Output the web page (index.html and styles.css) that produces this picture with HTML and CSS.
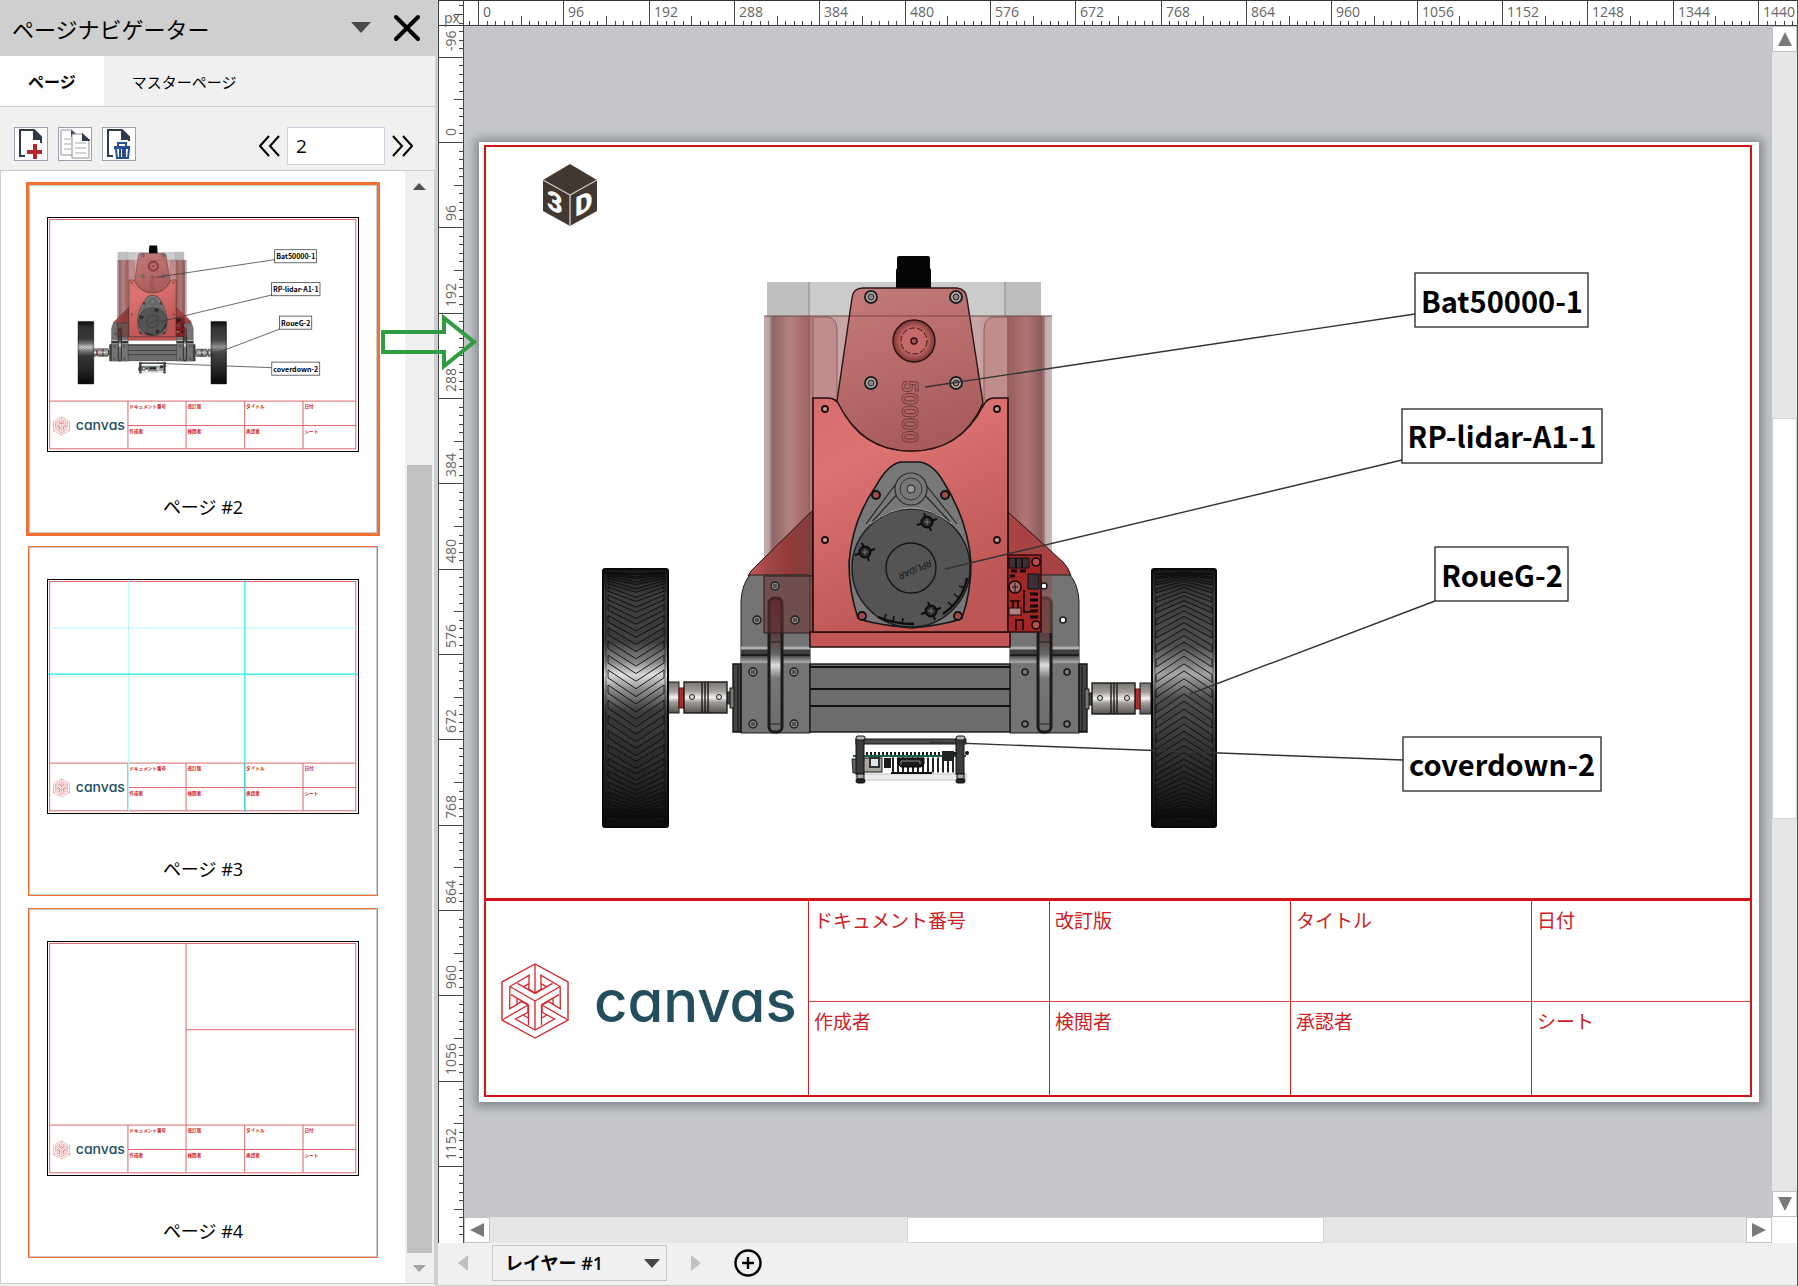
FILE: index.html
```html
<!DOCTYPE html>
<html lang="ja">
<head>
    <meta charset="UTF-8">
    <meta name="viewport" content="width=device-width, initial-scale=1.0">
    <title>ページナビゲーター</title>
    <link rel="stylesheet" href="styles.css">
</head>
<body>

    <!-- Shared drawings, used by the sheet and by the page thumbnails -->
    <svg class="defs" aria-hidden="true">
        <defs>
            <linearGradient id="gTire" x1="0" y1="0" x2="0" y2="1">
                <stop offset="0" stop-color="#161616"/>
                <stop offset=".1" stop-color="#3e3e3e"/>
                <stop offset=".28" stop-color="#404040"/>
                <stop offset=".36" stop-color="#8c8c8c"/>
                <stop offset=".41" stop-color="#e4e4e4"/>
                <stop offset=".47" stop-color="#8e8e8e"/>
                <stop offset=".55" stop-color="#3e3e3e"/>
                <stop offset=".8" stop-color="#282828"/>
                <stop offset="1" stop-color="#0c0c0c"/>
            </linearGradient>
            <linearGradient id="gTireR" x1="0" y1="0" x2="0" y2="1">
                <stop offset="0" stop-color="#161616"/>
                <stop offset=".1" stop-color="#3e3e3e"/>
                <stop offset=".3" stop-color="#505050"/>
                <stop offset=".41" stop-color="#aaa"/>
                <stop offset=".5" stop-color="#505050"/>
                <stop offset=".8" stop-color="#282828"/>
                <stop offset="1" stop-color="#0c0c0c"/>
            </linearGradient>
            <linearGradient id="gShell" x1="0" y1="0" x2="1" y2="0">
                <stop offset="0" stop-color="#c4b0b0"/>
                <stop offset=".025" stop-color="#b59a9a"/>
                <stop offset=".03" stop-color="#8f6464"/>
                <stop offset=".09" stop-color="#b58282"/>
                <stop offset=".15" stop-color="#a06464"/>
                <stop offset=".17" stop-color="#b98888"/>
                <stop offset=".26" stop-color="#c9a6a6"/>
                <stop offset=".74" stop-color="#c9a6a6"/>
                <stop offset=".84" stop-color="#b98080"/>
                <stop offset=".855" stop-color="#9a6060"/>
                <stop offset=".91" stop-color="#b07676"/>
                <stop offset=".965" stop-color="#8a5a5a"/>
                <stop offset=".975" stop-color="#c0a8a8"/>
                <stop offset="1" stop-color="#c8bcbc"/>
            </linearGradient>
            <linearGradient id="gPlate" x1="0" y1="0" x2=".4" y2="1">
                <stop offset="0" stop-color="#d86c6c"/>
                <stop offset=".3" stop-color="#dc7272"/>
                <stop offset="1" stop-color="#bd5555"/>
            </linearGradient>
            <linearGradient id="gBat" x1="0" y1="0" x2=".3" y2="1">
                <stop offset="0" stop-color="#c67c7c"/>
                <stop offset="1" stop-color="#aa5c5c"/>
            </linearGradient>
            <linearGradient id="gWing" x1="0" y1="0" x2="1" y2="0">
                <stop offset="0" stop-color="#c95a5a"/>
                <stop offset=".3" stop-color="#a04848"/>
                <stop offset=".6" stop-color="#943a3a"/>
                <stop offset="1" stop-color="#7e4040"/>
            </linearGradient>
            <linearGradient id="gMetal" x1="0" y1="0" x2="0" y2="1">
                <stop offset="0" stop-color="#77736f"/>
                <stop offset=".3" stop-color="#a39f9b"/>
                <stop offset=".5" stop-color="#f4f2f0"/>
                <stop offset=".65" stop-color="#a09c98"/>
                <stop offset="1" stop-color="#56524f"/>
            </linearGradient>
            <linearGradient id="gFold" x1="0" y1="0" x2="0" y2="1">
                <stop offset="0" stop-color="#777"/>
                <stop offset=".12" stop-color="#c4c4c4"/>
                <stop offset=".25" stop-color="#3c3c3c"/>
                <stop offset=".55" stop-color="#444"/>
                <stop offset=".9" stop-color="#aaa"/>
                <stop offset="1" stop-color="#6c6c6c"/>
            </linearGradient>
            <linearGradient id="gSlot" x1="0" y1="0" x2="0" y2="1">
                <stop offset="0" stop-color="#4c2c2c"/>
                <stop offset=".3" stop-color="#5a4444"/>
                <stop offset=".42" stop-color="#666"/>
                <stop offset=".5" stop-color="#ddd"/>
                <stop offset=".6" stop-color="#777"/>
                <stop offset="1" stop-color="#6c6c6c"/>
            </linearGradient>
            <radialGradient id="gKnob">
                <stop offset=".6" stop-color="#c46868"/>
                <stop offset="1" stop-color="#7a3434"/>
            </radialGradient>

            <g id="screw">
                <circle r="6" fill="#b9b3ae" stroke="#222" stroke-width="2"/>
                <circle r="3" fill="#8a8480" stroke="#222"/>
            </g>
            <g id="bolt">
                <circle r="4" fill="#8d8884" stroke="#1c1c1c" stroke-width="1.4"/>
                <path d="M-2-1H2M-2 1H2" stroke="#1c1c1c"/>
            </g>
            <g id="post" stroke="#0c0c0c">
                <path d="M-10 3L10-3M-3-9L4 9" stroke-width="2"/>
                <circle r="5.5" fill="#2a2a2a" stroke-width="2"/>
                <path d="M-3 0H3M0-3V3" stroke="#777"/>
            </g>
            <g id="coupling" stroke="#1a1a1a">
                <rect x="668" y="682" width="11" height="31" fill="url(#gMetal)"/>
                <rect x="679" y="688" width="5" height="20" fill="#a92c31" stroke="#571014"/>
                <rect x="727" y="692" width="4" height="12" fill="#444"/>
                <rect x="730" y="688" width="4" height="20" fill="#777"/>
                <rect x="684" y="682" width="43" height="31" fill="url(#gMetal)" stroke-width="1.4"/>
                <path d="M702 682V713M705 682V713M708 682V713" stroke-width="1.4"/>
                <circle cx="692" cy="697" r="2.5" fill="#ddd"/>
                <circle cx="719" cy="697" r="2.5" fill="#ddd"/>
            </g>
            <g id="bracket">
                <path d="M741 733V601Q742 584 750 575H808Q810 575 810 577V733Z" fill="#747474" stroke="#1d1d1d"/>
                <rect x="741" y="646" width="69" height="18" fill="url(#gFold)"/>
                <path d="M741 655H810" stroke="#111" stroke-width="1.4"/>
                <rect x="769" y="598" width="13" height="134" rx="5" fill="url(#gSlot)" stroke="#1a1a1a" stroke-width="3"/>
                <path d="M769 642H782M769 724H782" stroke="#222"/>
            </g>
            <!-- one third of the logo, repeated every 120 degrees -->
            <g id="logoArm" fill="none" stroke="#d3262b" stroke-width="1.3">
                <path d="M0-37V-8M-6.5-12L0-8L6.5-12"/>
                <path d="M0 0V29M-6.5 4V24M6.5 4V24"/>
                <path d="M-6.5 11L-19.5 18L0 29L19.5 18L6.5 11M-12 14L-6.5 17M12 14L6.5 17"/>
            </g>
            <g id="logo">
                <path d="M0-37L33-19V19L0 37L-33 19V-19Z" fill="none" stroke="#d3262b" stroke-width="1.4"/>
                <use href="#logoArm"/>
                <use href="#logoArm" transform="rotate(120)"/>
                <use href="#logoArm" transform="rotate(240)"/>
            </g>

            <g id="robot">
                <!-- transparent housing -->
                <rect x="767" y="282" width="274" height="36" fill="#cbcbcb"/>
                <rect x="767" y="282" width="42" height="36" fill="#bfbfbf"/>
                <rect x="1005" y="282" width="36" height="36" fill="#bdbdbd"/>
                <path d="M809 282V316M1005 282V316" stroke="#888"/>
                <rect x="764" y="316" width="288" height="317" fill="url(#gShell)"/>
                <path d="M764 316H1052" stroke="#6a4a4a"/>
                <path d="M813 317H828Q837 319 837 330V400H813ZM1008 317H993Q984 319 984 330V400H1008Z" fill="#c08c8c" stroke="#8e5c5c"/>
                <path d="M771 317V633M1044 317V633M809 317V570M1008 317V570" stroke="#74504f" stroke-opacity=".7"/>

                <!-- side wings and brackets -->
                <path d="M813 510L756 566Q750 571 748 576H813Z" fill="url(#gWing)" stroke="#2a1010"/>
                <path d="M1008 512L1063 562Q1069 568 1071 576H1008Z" fill="#a94343" stroke="#2a1010"/>
                <use href="#bracket"/>
                <use href="#bracket" transform="matrix(-1 0 0 1 1820 0)"/>
                <path d="M764 576H813V633H764Z" fill="#6b3030" fill-opacity=".55" stroke="#2e1a1a"/>
                <path d="M1040 576H1052V633H1040Z" fill="#8a5050" fill-opacity=".6"/>

                <!-- camera, battery and front plate -->
                <path d="M897 258Q897 256 899 256H928Q930 256 930 258V268L931 270V290H896V270L897 268Z" fill="#050505"/>
                <path d="M810 632H1010V647H810Z" fill="#c45656" stroke="#241010" stroke-width="1.4"/>
                <path d="M813 398H828Q836 398 840 406Q862 451 911 451Q960 451 983 406Q987 398 994 398H1008V632H813Z" fill="url(#gPlate)" stroke="#1d0c0c" stroke-width="1.6"/>
                <path d="M852 298Q853 288 863 288H957Q966 289 967 299L983 403Q962 451 911 451Q861 451 837 401Z" fill="url(#gBat)" stroke="#2b1414" stroke-width="1.4"/>
                <path d="M850 316H970" stroke="#7a4040"/>
                <use href="#screw" x="871" y="297"/>
                <use href="#screw" x="956" y="297"/>
                <use href="#screw" x="871" y="383"/>
                <use href="#screw" x="956" y="383"/>
                <circle cx="914" cy="341" r="21" fill="url(#gKnob)" stroke="#2a1010" stroke-width="1.4"/>
                <circle cx="914" cy="341" r="13" fill="#c46a6a" stroke="#3a1818" stroke-dasharray="6 2"/>
                <circle cx="914" cy="341" r="3" fill="#a85555" stroke="#2a1010" stroke-width="1.4"/>
                <text class="emboss" transform="translate(902 380) rotate(90)">50000</text>
                <g fill="#c9a0a0" stroke="#1d0c0c" stroke-width="1.8">
                    <circle cx="825" cy="409" r="3"/>
                    <circle cx="997" cy="409" r="3"/>
                    <circle cx="825" cy="540" r="3"/>
                    <circle cx="997" cy="540" r="3"/>
                </g>

                <!-- lidar -->
                <path d="M901 462H920Q933 464 943 481Q968 520 971 563Q971 592 962 618Q950 624 912 628Q870 624 858 618Q849 592 849 563Q852 520 876 486Q888 464 901 462Z" fill="#787878" stroke="#161616" stroke-width="1.6"/>
                <path d="M895 485L866 524M900 491L872 522M926 485L957 524M921 491L950 522" stroke="#262626" stroke-width="1.2"/>
                <circle cx="911" cy="568" r="59" fill="#545454" stroke="#1c1c1c" stroke-width="1.4"/>
                <path d="M870 524Q911 492 952 524" fill="none" stroke="#a8a8a8"/>
                <circle cx="911" cy="489" r="16" fill="#777" stroke="#2a2a2a" stroke-width="1.2"/>
                <circle cx="911" cy="489" r="11" fill="none" stroke="#333"/>
                <circle cx="911" cy="489" r="4" fill="#999" stroke="#222"/>
                <circle cx="911" cy="568" r="25" fill="none" stroke="#141414" stroke-width="1.4"/>
                <text class="lidar-text" transform="translate(930 560) rotate(157)">RPLIDAR</text>
                <use href="#post" x="927" y="522"/>
                <use href="#post" x="865" y="552"/>
                <use href="#post" x="931" y="611"/>
                <g fill="#a04a4a" stroke="#111" stroke-width="2">
                    <circle cx="876" cy="495" r="4"/>
                    <circle cx="945" cy="495" r="4"/>
                    <circle cx="862" cy="616" r="4"/>
                    <circle cx="958" cy="616" r="4"/>
                </g>
                <path d="M878 617Q894 624 914 624M943 614Q963 600 967 578" fill="none" stroke="#0c0c0c" stroke-width="2.4"/>
                <path d="M884 620L886 614M893 622L894 616M902 624L903 618M952 606L948 602M959 598L954 594M965 588L959 586" stroke="#0c0c0c" stroke-width="1.6"/>

                <!-- controller board -->
                <rect x="1008" y="555" width="33" height="77" fill="#a32626" stroke="#2a0808" stroke-width="1.4"/>
                <path d="M1009 558H1029V568H1009ZM1028 574H1039V589H1028Z" fill="#3c3038" stroke="#0d0d0d"/>
                <path d="M1011 571H1017M1020 571H1026M1010 576H1015M1030 594H1038M1030 600H1038M1030 606H1038M1030 611H1038M1030 617H1038" stroke="#120606" stroke-width="3"/>
                <path d="M1016 558V568M1022 558V568M1024 590V612H1031M1010 601H1020M1013 601V608M1018 601V608M1016 630V620H1023V630" fill="none" stroke="#120606" stroke-width="1.6"/>
                <rect x="1009" y="608" width="12" height="7" fill="#b08080" stroke="#220a0a"/>
                <circle cx="1015" cy="587" r="6" fill="#a86a6a" stroke="#180606" stroke-width="1.6"/>
                <path d="M1012 587H1018M1015 583V592" stroke="#180606"/>
                <circle cx="1036" cy="562" r="4" fill="#b05050" stroke="#180606" stroke-width="1.6"/>
                <circle cx="1036" cy="625" r="4" fill="#b05050" stroke="#180606" stroke-width="1.6"/>

                <!-- cross bar -->
                <rect x="810" y="664" width="200" height="68" fill="#6d6d6d" stroke="#161616" stroke-width="1.4"/>
                <path d="M810 667H1010M810 689H1010M810 706H1010" stroke="#0f0f0f" stroke-width="1.8"/>
                <path d="M733 664H741V732H733ZM1079 664H1087V732H1079Z" fill="#444" stroke="#111" stroke-width="1.4"/>
                <path d="M738 666V732M1082 666V732" stroke="#111"/>
                <use href="#bolt" x="753" y="672"/>
                <use href="#bolt" x="794" y="672"/>
                <use href="#bolt" x="753" y="724"/>
                <use href="#bolt" x="794" y="724"/>
                <use href="#bolt" x="757" y="620"/>
                <use href="#bolt" x="795" y="620"/>
                <use href="#bolt" x="775" y="586"/>
                <g fill="#777" stroke="#1a1a1a" stroke-width="1.6">
                    <circle cx="1025" cy="672" r="3"/>
                    <circle cx="1067" cy="672" r="3"/>
                    <circle cx="1025" cy="724" r="3"/>
                    <circle cx="1067" cy="724" r="3"/>
                    <circle cx="1044" cy="586" r="3" fill="#fff"/>
                    <circle cx="1063" cy="620" r="3" fill="#fff"/>
                </g>

                <!-- axles and wheels -->
                <use href="#coupling"/>
                <use href="#coupling" transform="matrix(-1 0 0 1 1819 1)"/>
                <rect x="603" y="569" width="65" height="258" rx="2" fill="url(#gTire)" stroke="#080808" stroke-width="2"/>
                <path d="M606 571V825M665 571V825" stroke="#000" stroke-opacity=".5"/>
                <path id="treadLeft" class="tread"/>
                <rect x="1152" y="569" width="64" height="258" rx="2" fill="url(#gTireR)" stroke="#080808" stroke-width="2"/>
                <path d="M1155 571V825M1213 571V825" stroke="#000" stroke-opacity=".5"/>
                <path id="treadRight" class="tread"/>

                <!-- lower board -->
                <rect x="856" y="774" width="110" height="6" fill="#ececec" stroke="#c4c4c4"/>
                <path d="M866 754H956" stroke="#1a1a1a" stroke-width="4" stroke-dasharray="2 2"/>
                <path d="M892 765H956" stroke="#222" stroke-width="15" stroke-dasharray="2 3"/>
                <rect x="856" y="739" width="110" height="5" fill="#4c4c4c" stroke="#141414"/>
                <path d="M853 756H966" stroke="#16624f" stroke-width="2"/>
                <path d="M852 759H858V773H853Z" fill="#666" stroke="#222"/>
                <rect x="863" y="758" width="19" height="14" fill="#a8a49e" stroke="#161616"/>
                <rect x="870" y="758" width="9" height="9" fill="#dfe4ee" stroke="#333" stroke-width="2"/>
                <path d="M884 758H891V768H884Z" fill="#1c1c1c"/>
                <path d="M898 758H924V764L921 767H901L898 764Z" fill="#1a1a1a" stroke="#000"/>
                <path d="M901 764V761H920V764" fill="none" stroke="#888"/>
                <path d="M942 751H954V761H942Z" fill="#222"/>
                <path d="M891 773H932" stroke="#111" stroke-width="2"/>
                <circle cx="967" cy="753" r="2" fill="#111"/>
                <g fill="#3c3c3c" stroke="#111">
                    <rect x="856" y="739" width="8" height="35"/>
                    <rect x="956" y="739" width="8" height="35"/>
                    <rect x="856" y="736" width="9" height="4" rx="2" fill="#b8b2aa"/>
                    <rect x="956" y="736" width="9" height="4" rx="2" fill="#b8b2aa"/>
                    <rect x="857" y="774" width="7" height="5" fill="#aaa49c"/>
                    <rect x="957" y="774" width="7" height="5" fill="#aaa49c"/>
                    <rect x="856" y="779" width="9" height="4" rx="2" fill="#222"/>
                    <rect x="956" y="779" width="9" height="4" rx="2" fill="#222"/>
                </g>
            </g>

            <g id="callouts">
                <path class="leader" d="M925 387L1415 314M945 569L1402 460M1190 694L1435 601M930 742L1403 760"/>
                <rect class="callout" x="1415" y="273" width="173" height="54"/>
                <rect class="callout" x="1402" y="409" width="200" height="54"/>
                <rect class="callout" x="1435" y="547" width="133" height="54"/>
                <rect class="callout" x="1403" y="737" width="198" height="54"/>
                <text class="callout-text" x="1502" y="313">Bat50000-1</text>
                <text class="callout-text" x="1502" y="448">RP-lidar-A1-1</text>
                <text class="callout-text" x="1502" y="587">RoueG-2</text>
                <text class="callout-text" x="1502" y="776">coverdown-2</text>
            </g>

            <!-- frame and title block for the thumbnails -->
            <g id="template">
                <rect class="mini-line" x="486" y="148" width="1264" height="947"/>
                <path class="mini-line" d="M486 898H1750M809 898V1095M1049 898V1095M1291 898V1095M1532 898V1095M809 999H1750"/>
                <use href="#logo" x="535" y="1001"/>
                <text class="mini-brand" x="594" y="1017">canvas</text>
                <g class="mini-text">
                    <text x="815" y="926">ドキュメント番号</text>
                    <text x="1055" y="926">改訂版</text>
                    <text x="1297" y="926">タイトル</text>
                    <text x="1538" y="926">日付</text>
                    <text x="815" y="1028">作成者</text>
                    <text x="1055" y="1028">検閲者</text>
                    <text x="1297" y="1028">承認者</text>
                    <text x="1538" y="1028">シート</text>
                </g>
            </g>
        </defs>
    </svg>

    <div class="app">
        <aside class="navigator">
            <header class="nav-header">
                <h1>ページナビゲーター</h1>
                <button class="icon-button" aria-label="メニュー">
                    <svg width="20" height="12"><path d="M0 0H20L10 11Z" fill="#4a4a4a"/></svg>
                </button>
                <button class="icon-button" aria-label="閉じる">
                    <svg width="28" height="28"><path d="M3 3L25 25M25 3L3 25" stroke="#000" stroke-width="4" stroke-linecap="round"/></svg>
                </button>
            </header>

            <nav class="tabs">
                <button class="tab active">ページ</button>
                <button class="tab">マスターページ</button>
            </nav>

            <div class="toolbar">
                <button class="tool" aria-label="ページを追加">
                    <svg width="32" height="32" fill="none">
                        <path d="M10 28H5V2H19L26 9V15" stroke="#2d3a4a" stroke-width="2"/>
                        <path d="M18 1L27 10V12H18Z" fill="#2d3a4a"/>
                        <path d="M20 16V31M12 24H27" stroke="#b3282d" stroke-width="4"/>
                    </svg>
                </button>
                <button class="tool" aria-label="ページを複製">
                    <svg width="32" height="32" fill="#fff" stroke="#8a909a">
                        <path d="M2 2H13L18 7V27H2Z"/>
                        <path d="M5 11H12M5 16H12M5 21H12" stroke="#aaa"/>
                        <path d="M12 2L19 8V9H12Z" fill="#2d3a4a" stroke="none"/>
                        <path d="M13 6H24L30 12V30H13Z"/>
                        <path d="M16 15H27M16 20H27M16 25H27" stroke="#aaa"/>
                        <path d="M23 5L31 12V13H23Z" fill="#2d3a4a" stroke="none"/>
                    </svg>
                </button>
                <button class="tool" aria-label="ページを削除">
                    <svg width="32" height="32" fill="none">
                        <path d="M10 28H5V2H19L26 9V13" stroke="#2d3a4a" stroke-width="2"/>
                        <path d="M18 1L27 10V12H18Z" fill="#2d3a4a"/>
                        <path d="M15 18V15H23V18" stroke="#24508f" stroke-width="2"/>
                        <path d="M11 18H27V21H11Z" fill="#24508f"/>
                        <path d="M13 21L14 30H25L26 21M17 21V30M20 21V30M22 21V30" stroke="#24508f" stroke-width="2"/>
                    </svg>
                </button>
                <div class="pager">
                    <button class="icon-button" aria-label="前のページ">
                        <svg width="21" height="22" fill="none" stroke="#000" stroke-width="2"><path d="M10 1L1 11L10 21M20 1L11 11L20 21"/></svg>
                    </button>
                    <input class="page-input" type="text" value="2" aria-label="ページ番号">
                    <button class="icon-button" aria-label="次のページ">
                        <svg width="21" height="22" fill="none" stroke="#000" stroke-width="2"><path d="M1 1L10 11L1 21M11 1L20 11L11 21"/></svg>
                    </button>
                </div>
            </div>

            <div class="page-list">
                <div class="cards">
                    <button class="card selected">
                        <svg class="thumb" viewBox="479 142 1280 960">
                            <use href="#template"/>
                            <use href="#robot"/>
                            <use href="#callouts"/>
                        </svg>
                        <span>ページ #2</span>
                    </button>
                    <button class="card">
                        <svg class="thumb" viewBox="479 142 1280 960">
                            <use href="#template"/>
                            <path d="M811 142V1102M479 340H1759" stroke="#b5f6f6" stroke-width="4"/>
                            <path d="M1292 142V1102M479 531H1759" stroke="#19eef2" stroke-width="5"/>
                        </svg>
                        <span>ページ #3</span>
                    </button>
                    <button class="card">
                        <svg class="thumb" viewBox="479 142 1280 960">
                            <use href="#template"/>
                            <path class="mini-line" d="M1049 148V900M1049 504H1746"/>
                        </svg>
                        <span>ページ #4</span>
                    </button>
                </div>
                <div class="list-scroll">
                    <button class="list-arrow" aria-label="上へ"><svg width="13" height="7"><path d="M0 7L6 0L13 7Z" fill="#505050"/></svg></button>
                    <div class="list-space"></div>
                    <div class="list-thumb"></div>
                    <button class="list-arrow" aria-label="下へ"><svg width="13" height="7"><path d="M0 0L6 7L13 0Z" fill="#a3a3a3"/></svg></button>
                </div>
            </div>
        </aside>

        <main class="editor">
            <div class="canvas-grid">
                <svg class="ruler-v" id="rulerV">
                    <path d="M0 24.5H26" stroke="#333"/>
                    <text x="5" y="22">px</text>
                </svg>
                <svg class="ruler-h" id="rulerH"></svg>

                <section class="workspace">
                    <div class="sheet">
                        <div class="frame">
                            <svg class="drawing" viewBox="486 147 1264 751">
                                <g>
                                    <path d="M570 164L597 180V211L570 226L543 211V180Z" fill="#43382f"/>
                                    <path d="M543 180L570 195L597 180M570 195V226" fill="none" stroke="#c9c5c1" stroke-width="1.4"/>
                                    <text class="cube-text" transform="translate(547 208) skewY(25)">3</text>
                                    <text class="cube-text" transform="translate(575 217) skewY(-25)">D</text>
                                </g>
                                <use href="#robot"/>
                                <use href="#callouts"/>
                            </svg>
                            <div class="title-block">
                                <div class="brand">
                                    <svg width="68" height="76" viewBox="-34 -38 68 76"><use href="#logo"/></svg>
                                    <span>canvas</span>
                                </div>
                                <div class="field">ドキュメント番号</div>
                                <div class="field">改訂版</div>
                                <div class="field">タイトル</div>
                                <div class="field">日付</div>
                                <div class="field">作成者</div>
                                <div class="field">検閲者</div>
                                <div class="field">承認者</div>
                                <div class="field">シート</div>
                            </div>
                        </div>
                    </div>
                </section>

                <div class="scroll-v">
                    <button class="scroll-button" aria-label="上へスクロール"><svg width="14" height="14"><path d="M0 14L7 0L14 14Z"/></svg></button>
                    <div class="before"></div>
                    <div class="scroll-thumb"></div>
                    <div class="after"></div>
                    <button class="scroll-button" aria-label="下へスクロール"><svg width="14" height="14"><path d="M0 0L7 14L14 0Z"/></svg></button>
                </div>

                <div class="scroll-h">
                    <button class="scroll-button" aria-label="左へスクロール"><svg width="14" height="14"><path d="M14 0L0 7L14 14Z"/></svg></button>
                    <div class="before"></div>
                    <div class="scroll-thumb"></div>
                    <div class="after"></div>
                    <button class="scroll-button" aria-label="右へスクロール"><svg width="14" height="14"><path d="M0 0L14 7L0 14Z"/></svg></button>
                </div>
                <div class="scroll-corner"></div>
            </div>

            <footer class="layer-bar">
                <button class="icon-button" aria-label="前のレイヤー"><svg width="10" height="16"><path d="M10 0L0 8L10 16Z" fill="#c0c0c0"/></svg></button>
                <div class="layer-select">
                    <select aria-label="レイヤー">
                        <option>レイヤー #1</option>
                    </select>
                </div>
                <button class="icon-button" aria-label="次のレイヤー"><svg width="10" height="16"><path d="M0 0L10 8L0 16Z" fill="#c0c0c0"/></svg></button>
                <button class="icon-button add-layer" aria-label="レイヤーを追加">
                    <svg width="28" height="28" fill="none" stroke="#000"><circle cx="14" cy="14" r="12.5" stroke-width="2.4"/><path d="M14 8V20M8 14H20" stroke-width="2.4"/></svg>
                </button>
            </footer>
        </main>

        <svg class="pointer-arrow" width="100" height="60" aria-hidden="true">
            <path d="M4 20H65V6L95 30L65 54V40H4Z" fill="none" stroke="#2f9c41" stroke-width="4"/>
        </svg>
    </div>

    <script>
        const NS = 'http://www.w3.org/2000/svg';
        const UNIT = 96 * 8 / 9; // 96 document px on screen

        function drawRuler(svg, origin, vertical, start) {
            const box = svg.getBoundingClientRect();
            const end = (vertical ? box.height : box.width) - 4;
            let d = '';
            for (let i = -20; ; i++) {
                const pos = Math.round(origin + i * UNIT / 10) + 0.5;
                if (pos > end) break;
                if (pos < 0) continue;
                const major = i % 10 === 0;
                if (major && pos < start) continue;
                const len = major ? 25 : i % 5 === 0 ? 10 : 5;
                d += vertical ? `M25 ${pos}h${-len}` : `M${pos} 25v${-len}`;
                if (major) {
                    const label = document.createElementNS(NS, 'text');
                    label.textContent = i / 10 * 96;
                    label.setAttribute('transform', vertical
                        ? `translate(17 ${Math.round(pos) - 7}) rotate(-90)`
                        : `translate(${Math.round(pos) + 4} 16)`);
                    svg.appendChild(label);
                }
            }
            const path = document.createElementNS(NS, 'path');
            path.setAttribute('d', d);
            path.setAttribute('stroke', '#444');
            svg.appendChild(path);
        }

        // Tread bars get closer together towards the rim
        function drawTread(id, x, width, dir) {
            let d = '';
            for (let i = -12; i <= 12; i++) {
                const a = i * 0.125;
                const y = 695 + 122 * Math.sin(a) - dir * 10 * Math.cos(a);
                const h = dir * 19 * Math.cos(a);
                const t = 8 * Math.cos(a);
                d += `M${x} ${y}L${x + width / 2} ${y + h}L${x + width} ${y}v${t}L${x + width / 2} ${y + h + t}L${x} ${y + t}Z`;
            }
            document.getElementById(id).setAttribute('d', d);
        }

        drawRuler(document.getElementById('rulerH'), 14, false, 0);
        drawRuler(document.getElementById('rulerV'), 141, true, 26);
        drawTread('treadLeft', 608, 56, 1);
        drawTread('treadRight', 1156, 56, -1);
    </script>

</body>
</html>
```
FILE: styles.css
```css
* {
    box-sizing: border-box;
}
body {
    margin: 0;
    font-family: 'Open Sans', 'Noto Sans CJK JP', sans-serif;
    color: #000;
    background: #f0f0f0;
}
button, input, select {
    font: inherit;
    color: inherit;
}
button {
    padding: 0;
    border: none;
    background: none;
    cursor: pointer;
}
svg {
    display: block;
}
.defs {
    position: absolute;
    width: 0;
    height: 0;
}
.app {
    position: relative;
    display: flex;
    height: 100vh;
    overflow: hidden;
}
.icon-button {
    display: flex;
    align-items: center;
    justify-content: center;
}

/* Page navigator */
.navigator {
    flex: none;
    display: flex;
    flex-direction: column;
    width: 438px;
    padding-bottom: 2px;
    border-right: 3px solid #d0d0d0;
}
.nav-header {
    display: flex;
    align-items: center;
    gap: 22px;
    height: 56px;
    padding: 0 14px 0 12px;
    background: #cfcfcf;
}
.nav-header h1 {
    flex: 1;
    margin: 0;
    font-size: 22px;
    font-weight: normal;
}
.tabs {
    display: flex;
    height: 51px;
    border-bottom: 1px solid #ccc;
}
.tab {
    padding: 0 28px;
    font-size: 15px;
}
.tab.active {
    font-size: 16px;
    font-weight: bold;
    background: #fdfdfd;
}
.toolbar {
    display: flex;
    align-items: flex-start;
    gap: 10px;
    height: 63px;
    padding: 20px 22px 0 14px;
}
.tool {
    width: 34px;
    height: 34px;
    border: 1px solid #9ca1ae;
    background: #fff;
}
.pager {
    display: flex;
    align-items: center;
    gap: 7px;
    margin-left: auto;
}
.page-input {
    width: 98px;
    height: 38px;
    padding: 0 8px;
    border: 1px solid #cdd1de;
    background: #fff;
    font-size: 19px;
}
.page-list {
    flex: 1;
    display: flex;
    min-height: 0;
    border: 1px solid #ccc;
    background: #fff;
}
.cards {
    flex: 1;
    display: flex;
    flex-direction: column;
    align-items: center;
    gap: 12px;
    padding-top: 13px;
    overflow: hidden;
}
.card {
    flex: none;
    display: flex;
    flex-direction: column;
    align-items: center;
    gap: 43px;
    width: 350px;
    height: 350px;
    padding-top: 32px;
    border: 1px solid #f37032;
    box-shadow: inset 0 0 0 1px #ccc;
    background: #fff;
    font-size: 18px;
    line-height: 24px;
}
.card.selected {
    box-shadow: inset 0 0 0 1px #ccc, 0 0 0 2px #f37032;
}
/* lines drawn wider so they stay visible at this scale */
.thumb {
    --line: 3;
    width: 312px;
    border: 1px solid #000;
}
.list-scroll {
    display: flex;
    flex-direction: column;
    width: 29px;
    padding: 0 2px;
    background: #f0f0f0;
}
.list-arrow {
    display: flex;
    align-items: center;
    justify-content: center;
    height: 30px;
}
.list-space {
    flex: 265;
}
.list-thumb {
    flex: 790;
    background: #c1c1c1;
}

/* Editor */
.editor {
    flex: 1;
    display: flex;
    flex-direction: column;
    min-width: 0;
    border-right: 1px solid #555;
}
.canvas-grid {
    flex: 1;
    display: grid;
    grid-template-columns: 26px minmax(0, 1fr) 25px;
    grid-template-rows: 26px minmax(0, 1fr) 26px;
    min-height: 0;
}
.ruler-v, .ruler-h {
    background: #fff;
    overflow: hidden;
}
.ruler-v text, .ruler-h text {
    font-size: 14px;
    fill: #666;
}
.ruler-v {
    grid-area: 1 / 1 / 4 / 2;
    width: 26px;
    height: 100%;
    border-top: 1px solid #333;
    border-left: 1px solid #444;
    border-right: 1px solid #444;
}
.ruler-h {
    grid-area: 1 / 2 / 2 / 4;
    width: 100%;
    height: 26px;
    border-top: 1px solid #333;
    border-bottom: 1px solid #444;
}
.workspace {
    grid-area: 2 / 2;
    padding: 116px 13px 0 15px;
    background: #c4c6cb;
    overflow: hidden;
}
.sheet {
    aspect-ratio: 4 / 3;
    padding: 3px 7px 5px 5px;
    background: #fff;
    box-shadow: 0 1px 9px 4px #85898d;
}
.frame {
    display: flex;
    flex-direction: column;
    height: 100%;
    border: 2px solid #d01418;
}
.drawing {
    width: 100%;
}
.title-block {
    flex: 1;
    display: grid;
    grid-template-columns: 322fr 241fr 241fr 241fr 219fr;
    grid-template-rows: 100fr 94fr;
    border-top: 3px solid #d01418;
    color: #cf2024;
    font-family: 'Noto Sans CJK JP', sans-serif;
    font-size: 19px;
    line-height: 24px;
}
.brand {
    grid-row: 1 / 3;
    display: flex;
    align-items: center;
    gap: 25px;
    padding: 6px 0 0 15px;
    color: #234e5e;
    font-family: Inter, sans-serif;
    font-size: 58px;
    font-weight: 500;
    font-feature-settings: 'cv11';
    line-height: 76px;
}
.field {
    padding: 7px 5px;
    border-left: 1px solid #cf2024;
}
.field:nth-child(n+6) {
    border-top: 1px solid #d8484b;
}

/* Drawing parts */
.tread {
    fill: #000;
    fill-opacity: .06;
    stroke: #0a0a0a;
    stroke-width: .9;
}
.emboss {
    font-family: Roboto, sans-serif;
    font-size: 22px;
    font-weight: bold;
    fill: none;
    stroke: #6e3434;
    stroke-width: .8;
}
.lidar-text {
    font-family: Roboto, sans-serif;
    font-size: 9px;
    font-style: italic;
    fill: #141414;
}
.leader, .callout {
    fill: none;
    stroke: #333;
    stroke-width: var(--line, 1.4);
}
.callout {
    fill: #fff;
}
.callout-text {
    font-family: 'Noto Sans CJK JP', sans-serif;
    font-size: 29px;
    font-weight: bold;
    text-anchor: middle;
}
.cube-text {
    font-family: Roboto, sans-serif;
    font-size: 27px;
    font-weight: 900;
    fill: #fff;
}
.mini-line {
    fill: none;
    stroke: #dc6366;
    stroke-width: 4;
}
.mini-brand {
    font-family: Inter, sans-serif;
    font-size: 58px;
    font-weight: 500;
    font-feature-settings: 'cv11';
    fill: #234e5e;
}
.mini-text {
    font-family: 'Noto Sans CJK JP', sans-serif;
    font-size: 19px;
    font-weight: bold;
    fill: #cf2024;
}

/* Scroll bars */
.scroll-v, .scroll-h {
    display: flex;
    background: #e6e6e6;
}
.scroll-v {
    grid-area: 2 / 3;
    flex-direction: column;
}
.scroll-h {
    grid-area: 3 / 2;
}
.scroll-corner {
    grid-area: 3 / 3;
    background: #fff;
}
.scroll-button {
    flex: none;
    display: flex;
    align-items: center;
    justify-content: center;
    width: 26px;
    height: 26px;
    border: 1px solid #c0c4c6;
    background: #fff;
    fill: #77797b;
}
.scroll-v .scroll-button {
    width: 25px;
}
.scroll-thumb {
    background: #fff;
    border: 1px solid #d0d4d6;
}
.scroll-v .before {
    flex: 366;
}
.scroll-v .scroll-thumb {
    flex: 400;
}
.scroll-v .after {
    flex: 372;
}
.scroll-h .before {
    flex: 417;
}
.scroll-h .scroll-thumb {
    flex: 416;
}
.scroll-h .after {
    flex: 422;
}

/* Layer bar */
.layer-bar {
    display: flex;
    align-items: center;
    gap: 24px;
    height: 43px;
    padding: 0 20px 2px;
    border-bottom: 1px solid #ccc;
}
.layer-select {
    position: relative;
}
.layer-select select {
    appearance: none;
    width: 175px;
    height: 36px;
    padding: 0 12px;
    border: 1px solid #c8c8c8;
    border-radius: 0;
    background: #f0f0f0;
    font-size: 18px;
    font-weight: 600;
}
.layer-select::after {
    content: '';
    position: absolute;
    top: 14px;
    right: 7px;
    border: 8px solid transparent;
    border-top: 9px solid #444;
    border-bottom: none;
    pointer-events: none;
}
.add-layer {
    margin-left: 9px;
}

/* Arrow laid over the navigator and the editor */
.pointer-arrow {
    position: absolute;
    top: 312px;
    left: 379px;
    pointer-events: none;
}
```
